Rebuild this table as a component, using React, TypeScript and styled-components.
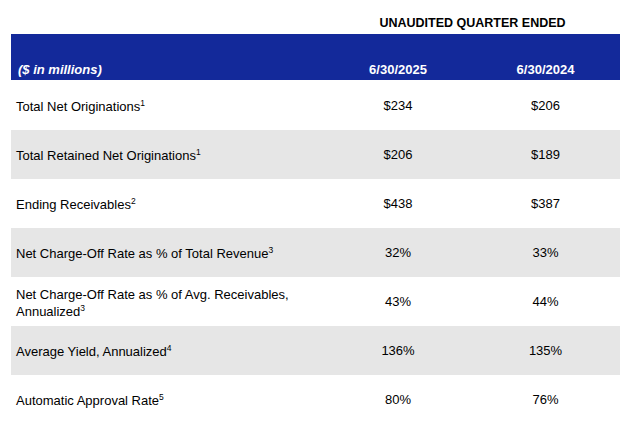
import React from "react";
import styled, { createGlobalStyle } from "styled-components";

const GlobalStyle = createGlobalStyle`
  html, body { margin: 0; padding: 0; background: #ffffff; }
  body { font-family: "Liberation Sans", Arial, sans-serif; color: #000; }
`;

const Page = styled.div`
  width: 640px;
  height: 426px;
  padding: 0 20px 0 11px;
  box-sizing: border-box;
  overflow: hidden;
`;

const COLS = "314px 146px 149px";

const TitleRow = styled.div`
  display: grid;
  grid-template-columns: ${COLS};
  height: 34px;
  align-items: end;
`;

const Title = styled.div`
  grid-column: 2 / span 2;
  text-align: center;
  font-size: 12.5px;
  font-weight: bold;
  line-height: 15px;
  padding-bottom: 3px;
`;

const HeaderBand = styled.div`
  display: grid;
  grid-template-columns: ${COLS};
  height: 46px;
  margin-bottom: 1px;
  background: #13299a;
  color: #ffffff;
  align-items: end;
  font-size: 13px;
  font-weight: bold;
  line-height: 15px;
  padding-bottom: 3px;
  box-sizing: border-box;
`;

const HeadLabel = styled.div`
  font-style: italic;
  padding-left: 7px;
`;

const HeadValue = styled.div`
  text-align: center;
`;

const Row = styled.div<{ $shade: boolean }>`
  display: grid;
  grid-template-columns: ${COLS};
  height: 49px;
  align-items: center;
  background: ${(p) => (p.$shade ? "#e6e6e6" : "transparent")};
  font-size: 13px;
  line-height: 17px;
`;

const Label = styled.div`
  padding-left: 5px;
  padding-right: 20px;
  padding-top: 2px;
`;

const Value = styled.div`
  text-align: center;
`;

const Sup = styled.sup`
  font-size: 8.5px;
  line-height: 0;
  vertical-align: 5px;
`;

const rows: { label: string; note: string; a: string; b: string }[] = [
  { label: "Total Net Originations", note: "1", a: "$234", b: "$206" },
  { label: "Total Retained Net Originations", note: "1", a: "$206", b: "$189" },
  { label: "Ending Receivables", note: "2", a: "$438", b: "$387" },
  { label: "Net Charge-Off Rate as % of Total Revenue", note: "3", a: "32%", b: "33%" },
  { label: "Net Charge-Off Rate as % of Avg. Receivables, Annualized", note: "3", a: "43%", b: "44%" },
  { label: "Average Yield, Annualized", note: "4", a: "136%", b: "135%" },
  { label: "Automatic Approval Rate", note: "5", a: "80%", b: "76%" },
];

export default function App() {
  return (
    <>
      <GlobalStyle />
      <Page>
        <TitleRow>
          <Title>UNAUDITED QUARTER ENDED</Title>
        </TitleRow>
        <HeaderBand>
          <HeadLabel>($ in millions)</HeadLabel>
          <HeadValue>6/30/2025</HeadValue>
          <HeadValue>6/30/2024</HeadValue>
        </HeaderBand>
        {rows.map((r, i) => (
          <Row key={r.label} $shade={i % 2 === 1}>
            <Label>
              {r.label}
              <Sup>{r.note}</Sup>
            </Label>
            <Value>{r.a}</Value>
            <Value>{r.b}</Value>
          </Row>
        ))}
      </Page>
    </>
  );
}
